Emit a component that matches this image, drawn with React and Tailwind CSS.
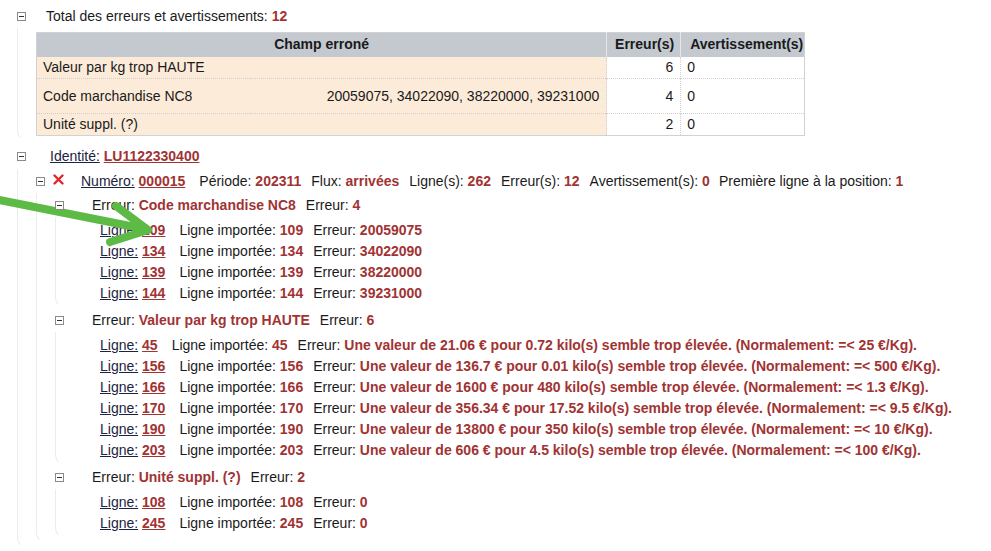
import React from 'react';

const red = 'text-[#a13333] font-bold';

function Minus() {
  return (
    <span className="relative z-10 inline-block w-[9px] h-[9px] border border-[#8a8a8a] bg-white flex-shrink-0">
      <span className="absolute left-[1px] right-[1px] top-[3px] h-px bg-[#333]" />
    </span>
  );
}

function Val({ children, link }) {
  return <span className={`${red} ${link ? 'underline' : ''}`}>{children}</span>;
}

function Ligne({ n, err }) {
  return (
    <div className="h-[21px] flex items-center whitespace-nowrap">
      <span className="mr-[14px]">
        <span className="underline text-[#1c2340]">Ligne:</span> <Val link>{n}</Val>
      </span>
      <span className="mr-[10px]">
        Ligne importée: <Val>{n}</Val>
      </span>
      <span>
        Erreur: <Val>{err}</Val>
      </span>
    </div>
  );
}

function Groupe({ titre, count, lignes }) {
  return (
    <div>
      <div className="h-[24px] flex items-center">
        <Minus />
        <span className="ml-[28px]">
          Erreur: <Val>{titre}</Val>
        </span>
        <span className="ml-[10px]">
          Erreur: <Val>{count}</Val>
        </span>
      </div>
      <div className="border-l border-b border-l-[#ececec] border-b-transparent rounded-bl-[10px] pl-[44px] pt-[3px] pb-[3px]">
        {lignes.map((l) => (
          <Ligne key={l[0]} n={l[0]} err={l[1]} />
        ))}
      </div>
    </div>
  );
}

const valeurs = [
  ['45', '21.06', '0.72', '25'],
  ['156', '136.7', '0.01', '500'],
  ['166', '1600', '480', '1.3'],
  ['170', '356.34', '17.52', '9.5'],
  ['190', '13800', '350', '10'],
  ['203', '606', '4.5', '100'],
].map(([n, v, k, m]) => [
  n,
  `Une valeur de ${v} € pour ${k} kilo(s) semble trop élevée. (Normalement: =< ${m} €/Kg).`,
]);

const rowBorder = 'border-t border-dotted border-[#cfcfcf]';

export default function App() {
  return (
    <div className="relative w-[991px] h-[551px] bg-white overflow-hidden font-['Liberation_Sans',Arial,sans-serif] text-[14px] text-[#1a1a1a] pl-[17px] pt-[4px]">
      {/* Total */}
      <div>
        <div className="h-[24px] flex items-center">
          <Minus />
          <span className="ml-[20px]">
            Total des erreurs et avertissements: <Val>12</Val>
          </span>
        </div>
        <div className="border-l border-b border-l-[#ececec] border-b-transparent rounded-bl-[10px] pl-[18px] pt-[4px] pb-[4px]">
          <table className="border-collapse border border-[#d2d2d2] w-[769px]">
            <thead>
              <tr className="bg-[#c3c9cf] h-[24px]">
                <th colSpan={2} className="w-[567px] font-bold text-center border-r border-[#e4e8eb]">
                  Champ erroné
                </th>
                <th className="w-[74px] font-bold text-right pr-[6px] border-r border-[#e4e8eb]">Erreur(s)</th>
                <th className="font-bold text-left pl-[9px]">Avertissement(s)</th>
              </tr>
            </thead>
            <tbody>
              <tr className="h-[22px]">
                <td className="bg-[#fcebd9] pl-[6px]">Valeur par kg trop HAUTE</td>
                <td className="bg-[#fcebd9]" />
                <td className="text-right pr-[7px] border-l border-r border-dotted border-[#cfcfcf]">6</td>
                <td className="pl-[6px]">0</td>
              </tr>
              <tr className={`h-[35px] ${rowBorder}`}>
                <td className="bg-[#fcebd9] pl-[6px]">Code marchandise NC8</td>
                <td className="bg-[#fcebd9] text-right pr-[7px]">20059075, 34022090, 38220000, 39231000</td>
                <td className="text-right pr-[7px] border-l border-r border-dotted border-[#cfcfcf]">4</td>
                <td className="pl-[6px]">0</td>
              </tr>
              <tr className={`h-[21px] ${rowBorder}`}>
                <td className="bg-[#fcebd9] pl-[6px]">Unité suppl. (?)</td>
                <td className="bg-[#fcebd9]" />
                <td className="text-right pr-[7px] border-l border-r border-dotted border-[#cfcfcf]">2</td>
                <td className="pl-[6px]">0</td>
              </tr>
            </tbody>
          </table>
        </div>
      </div>

      {/* Identité */}
      <div className="mt-[3px]">
        <div className="h-[25px] flex items-center">
          <Minus />
          <span className="ml-[24px]">
            <span className="underline text-[#1c2340]">Identité:</span> <Val link>LU1122330400</Val>
          </span>
        </div>
        <div className="border-l border-b border-l-[#ececec] border-b-transparent rounded-bl-[10px] pl-[18px] pb-[4px]">
          <div className="h-[24px] flex items-center whitespace-nowrap">
            <Minus />
            <svg width="11" height="11" viewBox="0 0 11 11" className="ml-[8px] -mt-[3px]">
              <path d="M1.5 1.5 L9.5 9.5 M9.5 1.5 L1.5 9.5" stroke="#e3262b" strokeWidth="2.4" strokeLinecap="round" />
            </svg>
            <span className="ml-[17px] mr-[14px]">
              <span className="underline text-[#1c2340]">Numéro:</span> <Val link>000015</Val>
            </span>
            <span className="mr-[10px]">Période: <Val>202311</Val></span>
            <span className="mr-[10px]">Flux: <Val>arrivées</Val></span>
            <span className="mr-[10px]">Ligne(s): <Val>262</Val></span>
            <span className="mr-[10px]">Erreur(s): <Val>12</Val></span>
            <span className="mr-[9px]">Avertissement(s): <Val>0</Val></span>
            <span>Première ligne à la position: <Val>1</Val></span>
          </div>
          <div className="border-l border-b border-l-[#ececec] border-b-transparent rounded-bl-[10px] pl-[18px] pb-[4px]">
            <Groupe
              titre="Code marchandise NC8"
              count="4"
              lignes={[
                ['109', '20059075'],
                ['134', '34022090'],
                ['139', '38220000'],
                ['144', '39231000'],
              ]}
            />
            <Groupe titre="Valeur par kg trop HAUTE" count="6" lignes={valeurs} />
            <Groupe
              titre="Unité suppl. (?)"
              count="2"
              lignes={[
                ['108', '0'],
                ['245', '0'],
              ]}
            />
          </div>
        </div>
      </div>

      {/* flèche verte */}
      <svg className="absolute left-0 top-0 pointer-events-none" width="200" height="260" viewBox="0 0 200 260">
        <path
          d="M-6 199 L140 228 M116 206 L148 230 L110 242"
          fill="none"
          stroke="#5dba45"
          strokeWidth="8"
          strokeLinecap="round"
          strokeLinejoin="round"
        />
      </svg>
    </div>
  );
}
